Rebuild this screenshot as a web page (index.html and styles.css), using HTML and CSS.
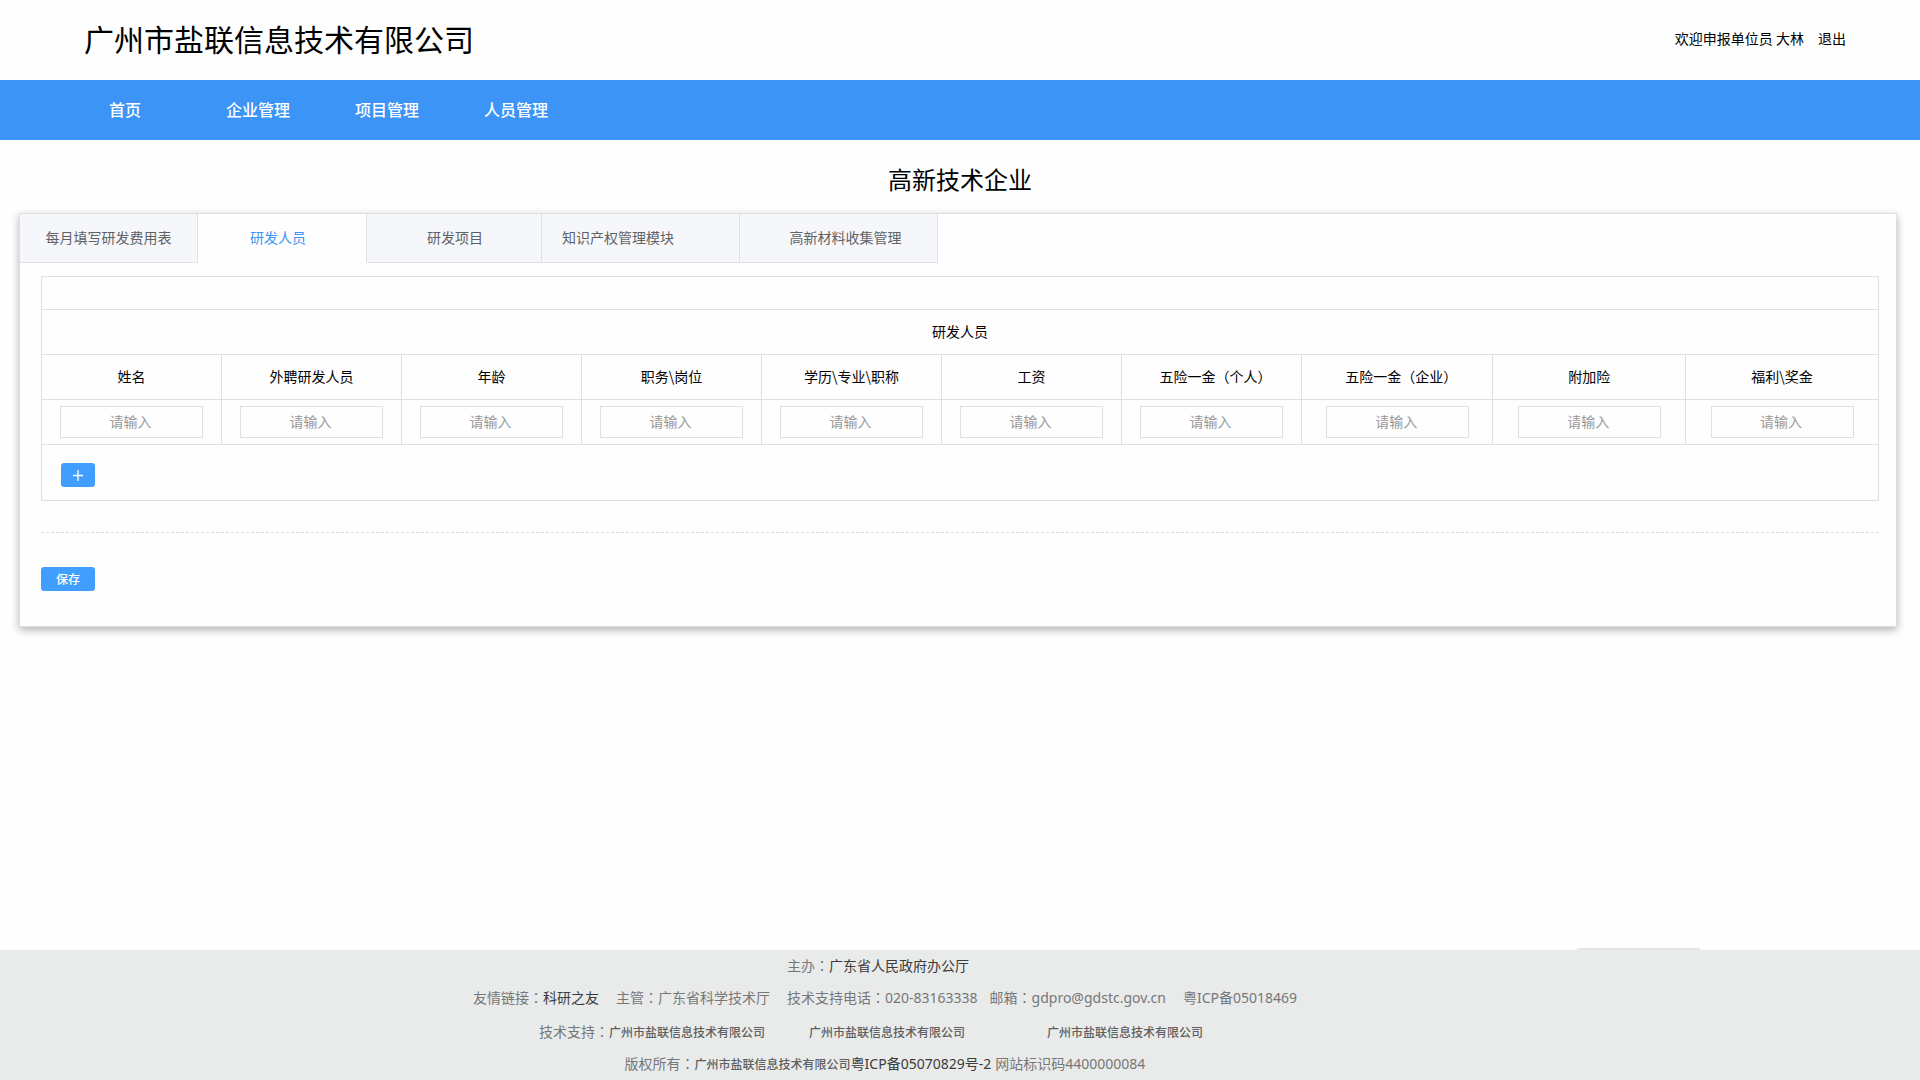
FILE: index.html
```
<!DOCTYPE html>
<html lang="zh-CN">

<head>
    <meta charset="utf-8">
    <meta name="viewport" content="width=device-width, initial-scale=1.0">
    <title>高新技术企业</title>
    <link rel="stylesheet" href="styles.css">
</head>

<body>

    <header class="top">
        <h1>广州市盐联信息技术有限公司</h1>
        <div class="user">
            <span>欢迎申报单位员 大林</span>
            <a href="#">退出</a>
        </div>
    </header>

    <nav class="menu">
        <a href="#" class="home">首页</a>
        <a href="#">企业管理</a>
        <a href="#">项目管理</a>
        <a href="#">人员管理</a>
    </nav>

    <main>
        <h2>高新技术企业</h2>

        <section class="panel">
            <div class="tabs">
                <button class="tab tab-cost">每月填写研发费用表</button>
                <button class="tab tab-staff valgt">研发人员</button>
                <button class="tab tab-project">研发项目</button>
                <button class="tab tab-ip">知识产权管理模块</button>
                <button class="tab tab-material">高新材料收集管理</button>
            </div>

            <form class="content">
                <table>
                    <colgroup>
                        <col span="7" class="normal">
                        <col>
                        <col class="wide">
                        <col class="wide">
                    </colgroup>
                    <tr class="blank">
                        <td colspan="10"></td>
                    </tr>
                    <tr>
                        <th colspan="10">研发人员</th>
                    </tr>
                    <tr>
                        <th>姓名</th>
                        <th>外聘研发人员</th>
                        <th>年龄</th>
                        <th>职务\岗位</th>
                        <th>学历\专业\职称</th>
                        <th>工资</th>
                        <th class="insurance">五险一金（个人）</th>
                        <th class="insurance">五险一金（企业）</th>
                        <th>附加险</th>
                        <th>福利\奖金</th>
                    </tr>
                    <tr>
                        <td><input type="text" aria-label="姓名" placeholder="请输入"></td>
                        <td><input type="text" aria-label="外聘研发人员" placeholder="请输入"></td>
                        <td><input type="text" aria-label="年龄" placeholder="请输入"></td>
                        <td><input type="text" aria-label="职务\岗位" placeholder="请输入"></td>
                        <td><input type="text" aria-label="学历\专业\职称" placeholder="请输入"></td>
                        <td><input type="text" aria-label="工资" placeholder="请输入"></td>
                        <td><input type="text" aria-label="五险一金（个人）" placeholder="请输入"></td>
                        <td><input type="text" aria-label="五险一金（企业）" placeholder="请输入"></td>
                        <td><input type="text" aria-label="附加险" placeholder="请输入"></td>
                        <td><input type="text" aria-label="福利\奖金" placeholder="请输入"></td>
                    </tr>
                    <tr class="add-row">
                        <td colspan="10">
                            <button type="button" class="btn add" aria-label="添加">
                                <svg width="12" height="12" viewBox="0 0 12 12">
                                    <path d="M6 1v11M1 6.5h10" stroke="#fff" stroke-width="1.3" fill="none" />
                                </svg>
                            </button>
                        </td>
                    </tr>
                </table>

                <hr>

                <button type="button" class="btn save">保存</button>
            </form>
        </section>
    </main>

    <footer>
        <p class="host">
            <span>主办<i lang="zh-TW">：</i><a href="#">广东省人民政府办公厅</a></span>
        </p>
        <p>
            <span>友情链接<i lang="zh-TW">：</i><a href="#">科研之友</a></span>
            <span class="gap">主管<i lang="zh-TW">：</i>广东省科学技术厅</span>
            <span class="gap">技术支持电话<i lang="zh-TW">：</i>020-83163338</span>
            <span class="gap-small">邮箱<i lang="zh-TW">：</i>gdpro@gdstc.gov.cn</span>
            <span class="gap">粤ICP备05018469</span>
        </p>
        <p class="support">
            <span>技术支持<i lang="zh-TW">：</i></span>
            <span class="company">广州市盐联信息技术有限公司</span>
            <span class="company second">广州市盐联信息技术有限公司</span>
            <span class="company third">广州市盐联信息技术有限公司</span>
        </p>
        <p>
            <span>版权所有<i lang="zh-TW">：</i></span>
            <span class="company">广州市盐联信息技术有限公司</span>
            <a href="#">粤ICP备05070829号-2</a>
            <span class="code">网站标识码4400000084</span>
        </p>
    </footer>

</body>

</html>
```
FILE: styles.css
```
* {
    box-sizing: border-box;
}

body {
    margin: 0;
    min-height: 100vh;
    display: flex;
    flex-direction: column;
    background-color: #fefefe;
    color: #000;
    font-family: "Noto Sans CJK SC", sans-serif;
    font-size: 14px;
}

button,
input {
    font-family: inherit;
}

a {
    color: inherit;
    text-decoration: none;
}

/* header */

.top {
    display: flex;
    justify-content: space-between;
    align-items: center;
    height: 80px;
    padding: 0 74px 4px 84px;
}

h1 {
    margin: 0;
    font-size: 30px;
    font-weight: 400;
}

.user {
    display: flex;
    gap: 14px;
}

.menu {
    display: flex;
    align-items: center;
    gap: 65px;
    height: 60px;
    padding: 0 0 2px 109px;
    background-color: #3c94f7;
    color: #fff;
    font-size: 16px;
    font-weight: 500;
}

.home {
    margin-right: 20px;
}

/* panel */

main {
    flex: 1;
}

h2 {
    margin: 0;
    padding-top: 4px;
    line-height: 69px;
    font-size: 24px;
    font-weight: 400;
    text-align: center;
}

.panel {
    margin: 0 23px 40px 19px;
    border: 1px solid #dfdfdf;
    box-shadow: 0 3px 8px rgba(0, 0, 0, 0.3);
}

.tabs {
    display: flex;
    height: 49px;
}

.tab {
    padding: 0 0 2px;
    border: 0;
    border-right: 1px solid #dfe1e5;
    border-bottom: 1px solid #dfe1e5;
    background-color: #f5f7fb;
    color: #606266;
    font-size: 14px;
}

.tab-cost {
    width: 178px;
}

.tab-staff {
    width: 169px;
    padding-right: 8px;
}

.tab-project {
    width: 175px;
    padding-left: 2px;
}

.tab-ip {
    width: 198px;
    padding-left: 20px;
    text-align: left;
}

.tab-material {
    width: 198px;
    padding-left: 14px;
}

.valgt {
    border-bottom-color: #fefefe;
    background-color: #fefefe;
    color: #3c94f7;
}

.content {
    padding: 13px 17px 35px 21px;
}

table {
    width: 100%;
    table-layout: fixed;
    border-collapse: collapse;
}

.normal {
    width: 9.8%;
}

.wide {
    width: 10.5%;
}

tr {
    height: 45px;
}

.blank {
    height: 33px;
}

.add-row {
    height: 56px;
}

th,
td {
    padding: 0;
    border: 1px solid #e0e0e0;
    font-weight: 400;
    text-align: center;
}

th {
    padding-bottom: 2px;
}

.insurance {
    padding-left: 8px;
}

td input {
    display: block;
    width: 143px;
    height: 32px;
    margin: 0 auto;
    padding: 0 2px 2px 0;
    border: 1px solid #e0e0e0;
    background-color: #fefefe;
    font-size: 14px;
    text-align: center;
}

td input::placeholder {
    color: #999;
}

.btn {
    display: flex;
    align-items: center;
    justify-content: center;
    height: 24px;
    padding: 0;
    border: 0;
    border-radius: 3px;
    background-color: #409eff;
    color: #fff;
    font-size: 12px;
    font-weight: 500;
}

.add-row td {
    padding-top: 4px;
}

.add {
    width: 34px;
    margin-left: 19px;
}

.save {
    width: 54px;
    padding-bottom: 2px;
}

hr {
    margin: 31px 0 34px;
    border: 0;
    border-top: 1px dashed #d8d8d8;
}

/* footer */

footer {
    position: relative;
    padding-right: 150px;
    background-color: #e9ebeb;
    color: #777;
    font-family: "Noto Sans", "Noto Sans CJK SC", sans-serif;
}

/* thin line on the top edge */
footer::before {
    content: "";
    position: absolute;
    top: -2px;
    right: 220px;
    width: 123px;
    height: 2px;
    background-color: #e6e6e6;
}

footer p {
    display: flex;
    justify-content: center;
    align-items: baseline;
    margin: 0;
    height: 32px;
    line-height: 30px;
}

footer a {
    color: #3c3c3c;
}

/* full-width colon in the middle of its box */
footer i {
    font-family: "Noto Sans CJK TC", sans-serif;
    font-style: normal;
}

.host {
    padding-right: 14px;
}

.gap {
    margin-left: 17px;
}

.gap-small {
    margin-left: 12px;
}

footer .support {
    margin-top: 2px;
    padding-right: 28px;
}

.company {
    color: #606060;
    font-size: 12px;
    font-weight: 500;
}

.second {
    margin-left: 44px;
}

.third {
    margin-left: 82px;
}

.code {
    margin-left: 4px;
}
```
